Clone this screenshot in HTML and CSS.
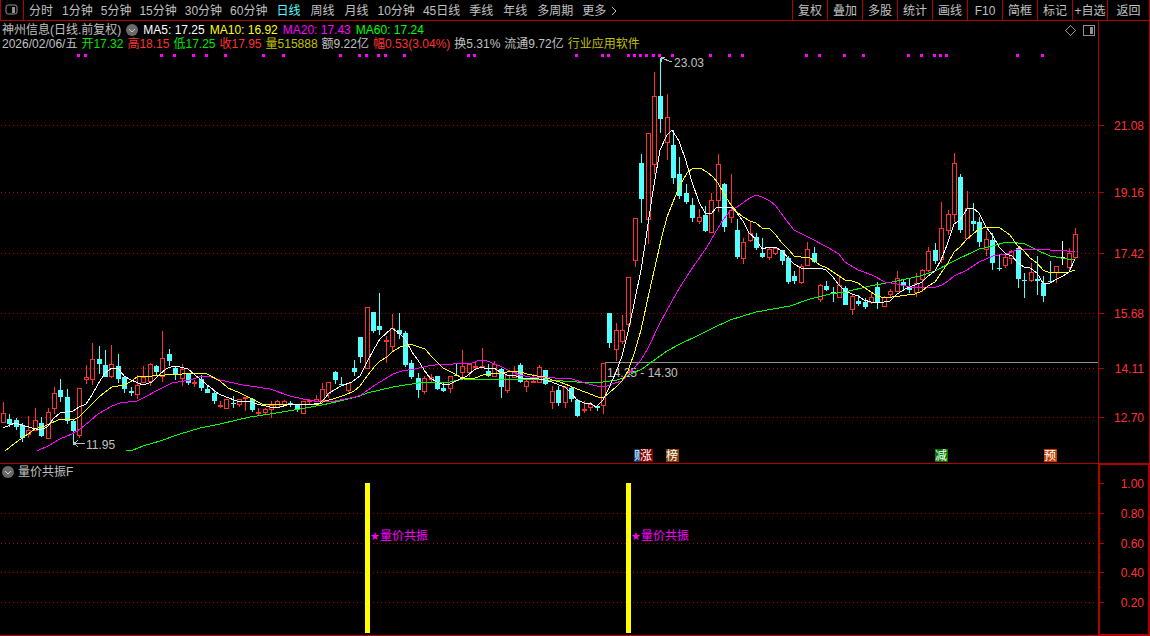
FILE: index.html
```html
<!DOCTYPE html>
<html lang="zh-CN">
  <head>
    <meta charset="utf-8" />
    <title>神州信息 日线</title>

    <link rel="stylesheet" href="styles.css">
  </head>

  <body>
    <header class="toolbar">
      <button class="toolbar-toggle" aria-label="侧栏">
        <svg width="14" height="12" viewBox="0 0 14 12">
          <rect x="1" y="1" width="11" height="9" rx="2" fill="none" stroke="#909090" />
          <rect x="7" y="3" width="3" height="6" fill="#909090" />
        </svg>
      </button>
      <nav class="periods">
        <button class="wide">分时</button>
        <button>1分钟</button>
        <button>5分钟</button>
        <button>15分钟</button>
        <button>30分钟</button>
        <button>60分钟</button>
        <button class="wide active">日线</button>
        <button class="wide">周线</button>
        <button class="wide">月线</button>
        <button>10分钟</button>
        <button>45日线</button>
        <button class="wide">季线</button>
        <button class="wide">年线</button>
        <button class="wide">多周期</button>
        <button class="more">更多
          <svg width="6" height="10" viewBox="0 0 6 10"><path d="M1 1l4 4-4 4" fill="none" stroke="#c0c0c0" /></svg>
        </button>
      </nav>
      <div class="tools">
        <button>复权</button>
        <button>叠加</button>
        <button>多股</button>
        <button>统计</button>
        <button>画线</button>
        <button>F10</button>
        <button>简框</button>
        <button>标记</button>
        <button>+自选</button>
        <button class="back">返回</button>
      </div>
    </header>

    <main>
      <section class="panel">
        <svg id="price" class="chart" viewBox="0 21 1150 442"></svg>
        <div class="info">
          <div class="row row--ma">
            <span class="stock">神州信息(日线.前复权)</span>
            <button class="fold" aria-label="展开">
              <svg width="12" height="12" viewBox="0 0 12 12"><circle cx="6" cy="6" r="6" fill="#6a6a6a" /><path d="M3 5l3 3 3-3" fill="none" stroke="#d0d0d0" /></svg>
            </button>
            <span class="white">MA5: 17.25</span>
            <span class="yellow">MA10: 16.92</span>
            <span class="magenta">MA20: 17.43</span>
            <span class="green">MA60: 17.24</span>
          </div>
          <div class="row">
            <span>2026/02/06/五</span>
            <span class="up-green">开17.32</span>
            <span class="red">高18.15</span>
            <span class="up-green">低17.25</span>
            <span class="red">收17.95</span>
            <span class="olive">量515888</span>
            <span>额9.22亿</span>
            <span class="red">幅0.53(3.04%)</span>
            <span>换5.31%</span>
            <span>流通9.72亿</span>
            <span class="olive">行业应用软件</span>
          </div>
        </div>
      </section>

      <section class="panel">
        <svg id="signal" class="chart" viewBox="0 463 1150 173"></svg>
        <div class="info">
          <div class="row row--title">
            <button class="fold" aria-label="展开">
              <svg width="12" height="12" viewBox="0 0 12 12"><circle cx="6" cy="6" r="6" fill="#6a6a6a" /><path d="M3 5l3 3 3-3" fill="none" stroke="#d0d0d0" /></svg>
            </button>
            <span>量价共振F</span>
          </div>
        </div>
      </section>
    </main>

    <script src="chart.js"></script>
  </body>
</html>
```

FILE: styles.css
```css
:root {
  --line: #b00000;
  --red: #ff3232;
  --cyan: #54ffff;
  --text: #c0c0c0;
}

* {
  box-sizing: border-box;
}

body {
  margin: 0;
  background: #000;
  color: var(--text);
  font-family: 'Liberation Sans', 'Noto Sans CJK SC', sans-serif;
  font-size: 12px;
  line-height: 14px;
}

button {
  margin: 0;
  padding: 0;
  border: 0;
  background: none;
  color: inherit;
  font: inherit;
  white-space: nowrap;
  cursor: pointer;
}

svg {
  display: block;
}

.toolbar {
  display: flex;
  height: 21px;
  border: 1px solid var(--line);
  border-top: 0;
}

.toolbar-toggle {
  width: 23px;
  padding-left: 4px;
  border-right: 1px solid var(--line);
}

.periods {
  display: flex;
  flex: 1;
}

.periods button {
  padding: 1px 4px 0;
}

.periods .wide {
  padding: 1px 5px 0;
}

.periods .active {
  color: var(--cyan);
}

.periods .more {
  display: flex;
  align-items: center;
  gap: 5px;
}

.tools {
  display: flex;
}

.tools button {
  width: 35px;
  padding-top: 1px;
  border-left: 1px solid var(--line);
}

.tools .back {
  width: 42px;
}

.panel {
  display: grid;
}

.chart,
.info {
  grid-area: 1 / 1;
}

.chart {
  width: 100%;
  height: auto;
}

.info {
  padding: 2px;
}

.row {
  display: flex;
  align-items: center;
  gap: 4px;
  white-space: nowrap;
}

.row--ma {
  gap: 5px;
}

.row--title {
  gap: 4px;
}

.white { color: #fff; }
.yellow { color: #ff0; }
.magenta { color: #f0f; }
.green { color: #0f0; }
.up-green { color: #00e600; }
.red { color: var(--red); }
.olive { color: #c0c000; }

/* chart parts */
.chart * {
  shape-rendering: crispEdges;
}

.chart text {
  fill: var(--text);
}

.chart .axis-label {
  fill: var(--red);
  text-anchor: end;
}

.grid {
  stroke: var(--line);
  stroke-dasharray: 1 3;
}

.frame {
  fill: none;
  stroke: var(--line);
}

.frame--active {
  stroke-width: 2;
}

.up {
  fill: none;
  stroke: var(--red);
}

.down {
  fill: var(--cyan);
}

.flat {
  fill: #fff;
}

.ma {
  fill: none;
  stroke-width: 1;
}

.ma5 { stroke: #fff; }
.ma10 { stroke: #ff0; }
.ma20 { stroke: #f0f; }
.ma60 { stroke: #0f0; }

.dot {
  fill: #f0f;
}

.level,
.arrow {
  fill: none;
  stroke: #909090;
}

.arrow {
  stroke: var(--text);
}

.chart .badge-text {
  fill: #fff;
}

.bar {
  fill: #ff0;
}

.chart .mark {
  fill: #f0f;
}

.star {
  font-family: 'DejaVu Sans', sans-serif;
  font-size: 11px;
}
```

FILE: chart.js
```js
const NS = 'http://www.w3.org/2000/svg'
const $price = document.querySelector('#price')
const $signal = document.querySelector('#signal')

const STEP = 6.383
const AXIS = 1098

// kind, high, body top, body bottom, low
const candles = `
r 402 413 422 423|c 414 419 424 427|c 418 420 427 430|c 423 425 438 442|r 416 430 434 438
r 408 420 430 430|c 417 423 436 437|r 408 412 438 438|r 387 393 408 414|c 379 390 397 402
c 389 397 421 424|c 420 421 431 445|r 388 388 435 438|r 365 377 379 384|r 343 359 379 385
c 346 359 364 374|c 350 365 377 377|r 345 364 376 378|c 354 366 379 383|c 376 377 389 393
c 387 391 393 396|r 375 385 394 399|r 366 377 382 383|r 363 364 381 386|c 365 366 372 376
r 331 358 376 382|c 349 354 361 366|c 367 368 374 380|r 364 369 378 386|c 373 374 383 385
r 380 382 383 387|c 375 379 388 391|c 385 389 393 393|c 391 393 401 404|r 401 405 406 408
r 399 399 408 408|c 396 403 404 408|r 399 399 404 407|r 397 397 398 411|c 398 399 410 412
r 408 412 413 415|r 408 409 412 415|r 401 405 409 418|r 400 401 407 407|r 400 401 404 406
c 401 403 404 407|c 404 405 410 412|r 401 401 413 413|r 399 400 401 405|r 395 399 401 401
r 383 389 400 401|r 382 382 393 398|c 371 372 380 384|c 377 384 385 385|r 383 383 390 392
c 360 368 372 376|c 337 337 357 363|r 307 307 368 369|c 312 312 331 333|c 293 326 330 335
r 336 340 341 363|r 314 328 346 351|c 313 330 334 339|c 331 333 365 367|c 360 363 377 379
c 373 378 390 398|r 376 378 391 394|r 374 377 379 382|c 376 376 389 390|c 383 388 391 392
r 376 376 388 393|c 363 375 376 376|r 350 366 372 377|r 364 364 372 377|r 362 366 367 370
r 348 366 367 368|c 364 371 376 377|r 361 364 376 376|c 368 369 387 398|r 375 375 390 393
r 366 372 377 377|c 363 365 382 383|r 380 381 386 392|r 374 381 382 383|r 365 367 382 382
c 370 370 384 385|r 386 391 402 409|c 386 390 403 406|r 386 387 402 408|c 387 388 399 402
c 399 400 416 417|r 401 409 410 413|r 402 404 407 411|c 405 406 408 411|r 363 363 405 414
c 313 313 343 348|r 323 330 349 361|r 315 330 341 344|r 277 277 324 327|r 218 218 260 267
c 154 163 199 223|r 133 133 219 244|r 72 96 164 174|c 58 96 119 133|r 94 117 142 160
c 130 145 178 184|c 157 174 196 199|c 184 193 202 204|c 198 205 218 222|r 209 217 221 224
c 206 215 231 232|r 193 200 232 232|r 154 164 200 212|c 183 184 227 232|r 174 210 217 223
c 219 230 257 259|r 238 242 258 264|r 222 233 240 242|c 233 237 248 250|c 238 253 257 258
r 247 249 257 260|r 247 248 253 255|c 250 250 261 265|c 256 258 282 284|c 271 276 281 284
r 264 266 282 284|r 242 249 265 265|c 247 253 262 263|r 284 285 299 302|c 281 286 290 291
c 287 292 293 302|r 275 285 297 297|c 286 288 305 305|r 294 296 309 315|c 295 301 304 306
c 298 302 307 309|r 293 297 302 304|c 282 287 303 309|r 296 297 306 306|r 289 291 294 297
r 271 278 291 291|c 279 282 286 291|c 279 288 290 293|r 273 283 292 297|r 269 270 279 292
r 247 251 270 272|c 243 250 261 264|r 202 228 259 263|r 210 214 230 235|r 153 163 214 222
c 174 177 230 233|r 191 208 238 238|c 203 221 224 231|c 217 222 242 247|r 231 239 249 256
c 233 240 263 270|c 255 268 269 271|r 255 257 265 268|r 250 251 258 264|c 247 248 279 288
c 273 280 281 298|r 263 272 280 282|c 256 279 281 295|c 276 283 296 302|c 261 281 282 282
r 266 266 272 283|w 241 257 258 265|r 248 253 267 271|r 228 234 257 259
`.trim().split(/[|\n]/).map((s) => s.split(' '))

const averages = {
  ma60: `126,451 133,450 143,446 160,441 180,434 200,428 220,424 237,420 250,417 270,414 300,409
    322,405 340,401 360,396 367,393 393,387 418,383 450,382 463,379 547,380 563,381 577,382 603,382
    617,380 623,378 633,373 642,369 653,361 667,351 680,344 697,336 713,328 730,320 756,312 790,306
    810,299 830,294 845,292 870,286 897,281 920,276 935,271 954,261 979,249 993,246 1006,242
    1018,243 1025,244 1037,250 1050,256 1067,259 1075,259`,
  ma20: `37,451 48,446 60,439 72,434 80,429 90,421 98,414 112,406 120,403 137,401 145,397 160,389
    172,383 190,380 202,376 208,376 220,380 243,385 270,389 290,396 303,399 315,401 335,401 345,399
    355,397 361,395 368,390 375,385 385,379 393,374 402,371 415,369 428,366 435,365 453,364 472,363
    480,360 487,361 495,364 502,367 510,371 520,375 530,377 545,377 555,378 572,379 585,383 597,386
    607,386 615,383 622,381 628,375 641,360 648,348 660,323 667,310 680,287 691,270 700,257 707,247
    715,233 723,220 731,210 737,207 750,198 756,195 762,197 770,201 776,206 783,216 794,230 810,238
    827,247 839,254 845,262 858,270 872,275 885,282 897,284 910,287 936,287 942,285 948,281 954,276
    967,270 979,262 993,256 1006,254 1012,252 1018,249 1037,249 1050,250 1067,251 1075,252`,
  ma10: `5,451 15,443 28,434 35,429 45,426 60,419 73,420 79,417 86,410 92,404 98,398 105,392 112,387
    125,385 133,380 137,377 152,376 165,375 200,373 207,374 220,381 228,388 240,393 250,398 262,404
    268,405 320,404 325,401 333,399 345,395 354,391 360,386 367,376 375,366 380,361 387,357 392,352
    400,347 410,344 425,349 432,357 443,368 453,373 462,378 475,378 483,375 500,373 507,372 517,371
    527,374 537,376 545,377 552,380 560,382 570,386 577,389 585,392 598,397 604,397 609,393 616,387
    622,381 628,371 635,351 641,330 649,293 655,267 661,240 667,217 673,202 680,185 687,173 693,168
    700,168 707,172 713,177 718,183 724,194 731,205 737,212 743,217 750,221 756,223 762,228 770,229
    776,235 782,243 789,250 794,256 801,257 810,258 820,265 827,268 833,272 845,280 852,281 858,283
    865,288 877,296 885,298 900,296 915,294 922,291 928,286 935,282 941,273 948,263 954,252 960,247
    967,239 973,234 979,229 987,227 1000,228 1010,235 1017,245 1024,251 1030,258 1037,263 1043,270
    1050,273 1069,272 1075,270`,
  ma5: `3,428 15,423 22,425 32,428 40,430 47,427 54,418 60,413 73,411 79,407 86,404 92,395 98,384
    105,373 112,368 118,368 124,376 131,380 143,385 152,382 160,374 166,369 173,366 180,367 188,369
    195,375 200,379 211,388 219,394 226,397 237,401 249,401 257,404 270,407 280,407 287,405 299,404
    314,404 320,403 325,398 329,393 341,386 352,382 360,376 367,362 374,349 380,339 392,328 400,334
    405,339 412,352 418,360 424,370 430,378 437,382 444,385 450,384 460,379 467,376 474,370 481,367
    487,369 494,368 500,372 507,375 516,376 521,378 533,378 545,380 552,382 559,385 565,387 571,393
    577,400 584,403 590,403 596,407 603,400 609,388 616,372 622,356 628,332 634,304 641,270 645,245
    652,197 660,150 667,135 672,130 679,141 686,161 692,182 699,202 705,213 711,214 717,207 731,207
    737,213 743,221 749,233 756,239 762,249 769,247 775,247 782,251 788,258 794,264 801,268 820,268
    826,270 833,277 839,285 845,291 852,294 858,296 864,300 871,302 884,302 890,301 897,294 907,288
    915,285 922,282 928,276 935,271 941,260 947,245 954,224 960,220 967,209 973,208 979,213 986,227
    993,236 999,247 1006,254 1012,256 1018,263 1024,267 1030,268 1037,273 1043,283 1050,283
    1057,279 1063,276 1069,272 1075,259`,
}

const dots = [
  78, 85, 161, 174, 193, 206, 225, 263, 283, 340, 359, 366, 378, 385, 404, 468, 474, 576, 602, 608,
  628, 634, 640, 646, 653, 659, 672, 710, 729, 742, 806, 819, 844, 863, 908, 921, 934, 940, 946,
  1017, 1042,
]

const priceTicks = [[125, '21.08'], [192, '19.16'], [253, '17.42'], [313, '15.68'], [368, '14.11'], [417, '12.70']]
const signalTicks = [[483, '1.00'], [513, '0.80'], [543, '0.60'], [572, '0.40'], [602, '0.20']]

// later badges cover earlier ones
const badges = [
  [634, '财', '#003c78'],
  [640, '涨', '#800000'],
  [666, '榜', '#804000'],
  [935, '减', '#007800'],
  [1044, '预', '#c04000'],
]

function add(parent, name, attrs, text) {
  const el = document.createElementNS(NS, name)
  for (const key in attrs) el.setAttribute(key, attrs[key])
  if (text) el.textContent = text
  parent.appendChild(el)
  return el
}

function path(parent, cls, d) {
  return add(parent, 'path', { class: cls, d })
}

function drawTick(svg, y, label) {
  path(svg, 'frame', `M${AXIS} ${y + 0.5}h6`)
  add(svg, 'text', { class: 'axis-label', x: 1144, y: y + 5 }, label)
}

function drawCandle([kind, ...values], i) {
  const [high, top, bottom, low] = values.map(Number)
  const x = Math.floor(3.4 + STEP * i)

  if (kind === 'r') {
    // hollow body, wick only outside of it
    path($price, 'up', `M${x + 0.5} ${high}V${top}M${x + 0.5} ${bottom}V${Math.max(low, bottom)}`)
    add($price, 'rect', { class: 'up', x: x - 1.5, y: top + 0.5, width: 4, height: bottom - top })
    return
  }

  const cls = kind === 'c' ? 'down' : 'flat'
  add($price, 'rect', { class: cls, x, y: high, width: 1, height: low - high })
  add($price, 'rect', { class: cls, x: x - 2, y: top, width: 5, height: bottom - top })
}

function drawPrice() {
  priceTicks.forEach(([y, label]) => {
    path($price, 'grid', `M1 ${y + 0.5}H${AXIS - 3}`)
    drawTick($price, y, label)
  })
  path($price, 'frame', `M${AXIS + 0.5} 21V463M1149.5 21V463`)

  path($price, 'level', `M605 362.5H${AXIS}`)
  add($price, 'text', { x: 607, y: 377 }, '14.25 - 14.30')

  candles.forEach(drawCandle)
  for (const name in averages) {
    add($price, 'polyline', { class: `ma ${name}`, points: averages[name] })
  }
  dots.forEach((x) => add($price, 'rect', { class: 'dot', x: x - 1, y: 54, width: 3, height: 3 }))

  path($price, 'arrow', 'M74 443.5H85M78 440L74 443.5L78 447')
  add($price, 'text', { x: 86, y: 449 }, '11.95')
  path($price, 'arrow', 'M661 58L672 62M665 57.5H661V62')
  add($price, 'text', { x: 674, y: 67 }, '23.03')

  badges.forEach(([x, label, fill]) => {
    add($price, 'rect', { x, y: 449, width: 13, height: 13, fill })
    add($price, 'text', { class: 'badge-text', x, y: 460 }, label)
  })

  // corner tools
  path($price, 'level', 'M1070.5 25.5l5 5-5 5-5-5z')
  add($price, 'rect', { class: 'level', x: 1083.5, y: 25.5, width: 11, height: 10, rx: 1 })
  add($price, 'rect', { x: 1090, y: 27, width: 3, height: 7, fill: '#909090' })
}

function drawSignal() {
  signalTicks.forEach(([y, label], i) => {
    if (i > 0) {
      path($signal, 'grid', `M1 ${y + 0.5}H${AXIS - 3}`)
      path($signal, 'frame', `M${AXIS} ${y - 14.5}h3`)
    }
    drawTick($signal, y, label)
  })
  path($signal, 'frame', `M0 463.5H${AXIS}M0 635.5H${AXIS}`)
  add($signal, 'rect', { class: 'frame frame--active', x: AXIS + 1, y: 464, width: 50, height: 171 })

  ;[365, 626].forEach((x) => {
    add($signal, 'rect', { class: 'bar', x, y: 483, width: 5, height: 150 })
    const $mark = add($signal, 'text', { class: 'mark', x: x + 5, y: 540 })
    add($mark, 'tspan', { class: 'star' }, '★')
    add($mark, 'tspan', {}, '量价共振')
  })
}

drawPrice()
drawSignal()
```
